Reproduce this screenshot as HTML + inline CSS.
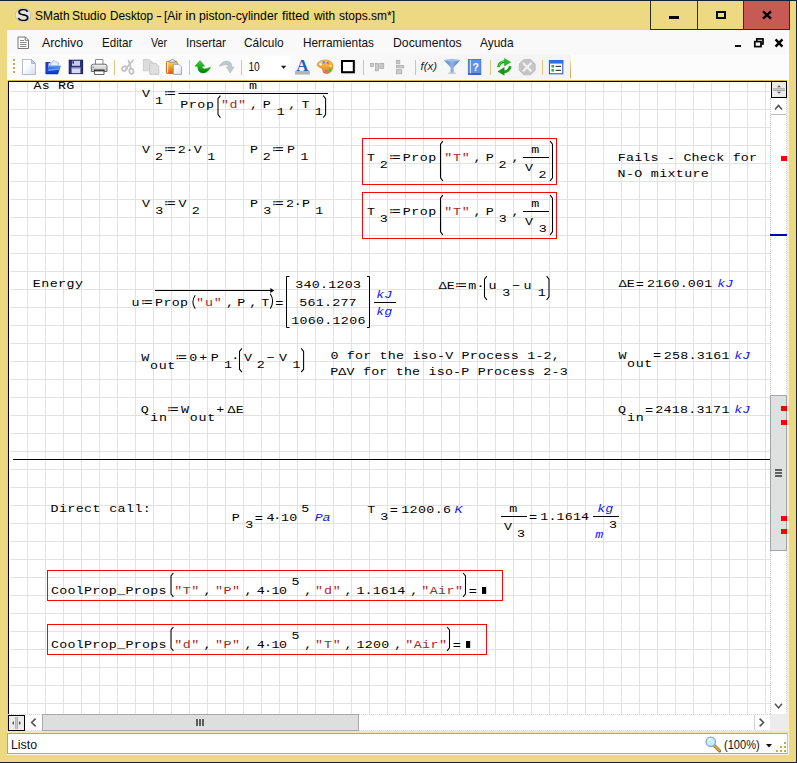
<!DOCTYPE html>
<html lang="es">
<head>
<meta charset="utf-8">
<title>SMath Studio Desktop - [Air in piston-cylinder fitted with stops.sm*]</title>
<style>
html,body{margin:0;padding:0;}
body{width:797px;height:763px;overflow:hidden;background:#ecd982;position:relative;
  font-family:"Liberation Sans",sans-serif;font-size:12px;color:#000;}
.abs,#win *{position:absolute;box-sizing:border-box;}
#win{position:absolute;left:0;top:0;width:797px;height:763px;background:#ecd982;overflow:hidden;}
#edge-t{left:0;top:0;width:797px;height:1px;background:#172231;}
#edge-r{left:796px;top:0;width:1px;height:763px;background:#172231;}
#edge-b{left:0;top:762px;width:797px;height:1px;background:#172231;}
#title{left:0;top:6px;width:640px;height:20px;line-height:20px;font-size:13px;white-space:nowrap;color:#000;}
#title span{top:0;height:20px;transform-origin:0 50%;white-space:nowrap;}
.wb{top:1px;height:29px;border-left:1px solid #2b2b30;border-bottom:1px solid #2b2b30;}
#wb-min{left:650px;width:47px;}
#wb-max{left:697px;width:46px;}
#wb-cls{left:743px;width:47px;background:#c75a54;border-right:1px solid #2b2b30;}
#client{left:7px;top:30px;width:782px;height:725px;background:#f9f9fa;}
/* menu */
#menubar{left:0;top:0;width:782px;height:25px;background:#f9f9fa;}
.mi{top:1px;height:25px;line-height:25px;font-size:12.2px;white-space:nowrap;color:#111;transform-origin:0 50%;}
/* toolbar */
#toolbar{left:0;top:24px;width:564px;height:25px;background:linear-gradient(to right,#fdfdfd 0%,#fbfbfb 40%,#f4f4f4 100%);border-radius:0 3px 3px 0;}
#tbedge{left:563px;top:30px;width:1px;height:18px;background:linear-gradient(to bottom,rgba(217,186,100,0.2),#d9ba64 50%,#cfa84a);}
#tbrest{left:564px;top:25px;width:218px;height:25px;background:#fcfcfc;}
.sep{top:5px;width:1px;height:14px;background:#dcc37a;}
.gd{left:6px;width:2px;height:2px;background:#c9a84c;margin-top:1px;}
/* worksheet frame */
#wsgold{left:0;top:50px;width:782px;height:1px;background:#d9b84a;}
#wsgoldl{left:0;top:50px;width:1px;height:652px;background:#e9d27a;}
#wsblack{left:1px;top:51px;width:779px;height:1px;background:#000;}
#wsblackl{left:1px;top:51px;width:1px;height:650px;background:#000;}
#ws{left:2px;top:52px;width:761px;height:632px;background-color:#fff;overflow:hidden;
  background-image:linear-gradient(to right,#e1e3e1 1px,transparent 1px),linear-gradient(to bottom,#e1e3e1 1px,transparent 1px);
  background-size:18px 18px;background-position:0px 9px;}
#ws svg{left:0;top:0;}
#ws text{font-family:"Liberation Mono","DejaVu Sans Mono",monospace;font-size:11.500px;}
#ws text.r{fill:#a82626;}
#ws text.b{fill:#1414f0;}
#ws text.op{font-family:"DejaVu Sans",sans-serif;font-size:12.2px;letter-spacing:0;}
#ws text.eq{font-family:"Liberation Mono",monospace;font-size:13.6px;letter-spacing:0;}
#ws .par{fill:none;stroke:#000;stroke-width:1.05;}
/* scrollbars */
#vs{left:763px;top:68px;width:17px;height:616px;background:#fff;border-left:1px dotted #c4c4c4;border-right:1px dotted #cfd6e8;}
#vsplit{left:764px;top:51px;width:16px;height:17px;border:1px solid #000;background:#ececec;}
#vthumb{left:763px;top:365px;width:17px;height:156px;background:#dfe0e0;border:1px solid #a3a3aa;}
.mk{left:774px;width:6px;height:5px;background:#ff0000;}
#rstrip{left:780px;top:50px;width:2px;height:652px;background:#f6efc9;}
#hs{left:1px;top:684px;width:762px;height:17px;background:#fff;border-top:1px dotted #d4d4d4;border-bottom:1px dotted #d9d9d9;}
#hsplit{left:1px;top:685px;width:17px;height:16px;border:1px solid #000;background:#ececec;}
#hthumb{left:35px;top:684px;width:317px;height:17px;background:#dddede;border:1px solid #a9a9ad;}
#corner{left:763px;top:684px;width:17px;height:17px;background:#ececec;}
#gap{left:0;top:701px;width:782px;height:2px;background:#f3e6b0;}
/* status */
#status{left:0;top:703px;width:781px;height:21px;background:#fff;border:1px solid #a5a5a5;border-right-color:#c4c4c4;}
#statusu{left:0;top:724px;width:782px;height:1px;background:#fbf7e4;}
#listo{left:4.49px;top:704px;height:21px;line-height:22px;font-size:12.2px;color:#111;transform-origin:0 50%;transform:scaleX(1.0125);}
#zoomt{left:716.69px;top:704px;height:21px;line-height:22px;font-size:12.2px;color:#111;white-space:nowrap;transform-origin:0 50%;transform:scaleX(0.9079);}
svg{overflow:visible;}
</style>
</head>
<body>
<div id="win">
  <div id="edge-t"></div><div id="edge-r"></div><div id="edge-b"></div>

  <!-- title bar -->
  <svg style="left:14px;top:7px" width="18" height="16" viewBox="0 0 18 16">
    <ellipse cx="9" cy="8" rx="7.8" ry="6.9" fill="#e3e4e4" stroke="#b9b9b4" stroke-width="0.7"/>
    <text x="9" y="13.8" text-anchor="middle" font-family="Liberation Sans,sans-serif" font-size="16.2" fill="#000" transform="translate(9 0) scale(1.16 1) translate(-9 0)">S</text>
  </svg>
  <div id="title"><span style="left:35.38px;transform:scaleX(0.9194)">SMath</span> <span style="left:72.47px;transform:scaleX(0.9278)">Studio</span> <span style="left:109.90px;transform:scaleX(0.9043)">Desktop</span> <span style="left:156.10px;transform:scaleX(1.4000)">-</span> <span style="left:164.08px;transform:scaleX(0.9211)">[Air</span> <span style="left:185.60px;transform:scaleX(1.0000)">in</span> <span style="left:198.86px;transform:scaleX(0.9398)">piston-cylinder</span> <span style="left:282.10px;transform:scaleX(0.9679)">fitted</span> <span style="left:313.80px;transform:scaleX(0.9174)">with</span> <span style="left:338.78px;transform:scaleX(0.9237)">stops.sm*]</span></div>
  <div class="wb" id="wb-min"><div style="left:18px;top:15px;width:10px;height:3px;background:#000"></div></div>
  <div class="wb" id="wb-max"><div style="left:18px;top:10px;width:10px;height:8px;border:2px solid #000"></div></div>
  <div class="wb" id="wb-cls">
    <svg style="left:18px;top:10px" width="10" height="8" viewBox="0 0 10 8"><path d="M1 0.3 L9 7.7 M9 0.3 L1 7.7" stroke="#000" stroke-width="2.3" fill="none"/></svg>
  </div>

  <div id="client">
    <!-- menu bar -->
    <div id="menubar">
      <svg style="left:10px;top:6px" width="13" height="14" viewBox="0 0 13 14">
        <path d="M1 1 H8.5 L11.5 4 V12.5 H1 Z" fill="#fff" stroke="#777" stroke-width="1"/>
        <path d="M8.2 1 V4.3 H11.5" fill="none" stroke="#777" stroke-width="1"/>
        <path d="M3 4.5 H7 M3 6.5 H9.5 M3 8.5 H9.5 M3 10.5 H9.5" stroke="#8a8a8a" stroke-width="1"/>
      </svg>
      <div class="mi" style="left:35.30px;transform:scaleX(1.0100)">Archivo</div>
      <div class="mi" style="left:94.65px;transform:scaleX(0.9516)">Editar</div>
      <div class="mi" style="left:144.00px;transform:scaleX(0.8722)">Ver</div>
      <div class="mi" style="left:178.63px;transform:scaleX(0.9675)">Insertar</div>
      <div class="mi" style="left:237.40px;transform:scaleX(0.9775)">Cálculo</div>
      <div class="mi" style="left:295.73px;transform:scaleX(0.9694)">Herramientas</div>
      <div class="mi" style="left:385.70px;transform:scaleX(1.0030)">Documentos</div>
      <div class="mi" style="left:473.30px;transform:scaleX(0.9765)">Ayuda</div>
      <!-- MDI child buttons -->
      <div style="left:728px;top:15px;width:6px;height:2px;background:#111"></div>
      <svg style="left:747px;top:8px" width="10" height="10" viewBox="0 0 10 10">
        <rect x="2.8" y="0.9" width="6.2" height="5" fill="none" stroke="#000" stroke-width="1.7"/>
        <rect x="0.8" y="3.6" width="6.2" height="5" fill="#fbfbfb" stroke="#000" stroke-width="1.7"/>
      </svg>
      <svg style="left:768px;top:9px" width="8" height="8" viewBox="0 0 8 8"><path d="M0.6 0.4 L7.4 7.6 M7.4 0.4 L0.6 7.6" stroke="#000" stroke-width="2.4" fill="none"/></svg>
    </div>

    <!-- toolbar -->
    <div id="tbrest"></div>
    <div id="toolbar">
      <div class="gd" style="top:4px"></div><div class="gd" style="top:8px"></div><div class="gd" style="top:12px"></div><div class="gd" style="top:16px"></div>
      <svg style="left:0;top:0" width="564" height="25" viewBox="7 54 564 25">
  <defs>
    <linearGradient id="gpage" x1="0" y1="0" x2="1" y2="1"><stop offset="0.35" stop-color="#ffffff"/><stop offset="1" stop-color="#d3dbf0"/></linearGradient>
    <linearGradient id="gfold" x1="0" y1="0" x2="0" y2="1"><stop offset="0" stop-color="#6fa6ff"/><stop offset="0.45" stop-color="#1f57e0"/><stop offset="1" stop-color="#0b2fb4"/></linearGradient>
    <linearGradient id="gclip" x1="0" y1="0" x2="0" y2="1"><stop offset="0" stop-color="#ffdf55"/><stop offset="1" stop-color="#dc5a00"/></linearGradient>
    <linearGradient id="ggreen" x1="0" y1="0" x2="0" y2="1"><stop offset="0" stop-color="#2fe02f"/><stop offset="1" stop-color="#057a05"/></linearGradient>
    <linearGradient id="gprn" x1="0" y1="0" x2="0" y2="1"><stop offset="0" stop-color="#f4f4f4"/><stop offset="1" stop-color="#b9b9b9"/></linearGradient>
    <linearGradient id="gpal" x1="0" y1="0" x2="0" y2="1"><stop offset="0" stop-color="#ffcf6a"/><stop offset="1" stop-color="#e07a10"/></linearGradient>
    <linearGradient id="gfun" x1="0" y1="0" x2="1" y2="0"><stop offset="0" stop-color="#4f7fc4"/><stop offset="0.5" stop-color="#8fb2e6"/><stop offset="1" stop-color="#4a76bb"/></linearGradient>
  </defs>
  <!-- new -->
  <path d="M22.5 59.5 H31.5 L35.5 63.5 V74.5 H22.5 Z" fill="url(#gpage)" stroke="#adb4cc" stroke-width="0.9"/>
  <path d="M31.5 59.5 V63.5 H35.5 Z" fill="#c3cae0" stroke="#a3abc4" stroke-width="0.8"/>
  <!-- open -->
  <path d="M45.4 62 H50 L51 63.2 H48.5 V74 H45.4 Z" fill="#1a3fd0"/>
  <path d="M49 66 L53.5 60.5 L58.8 63 L57.5 66.5 Z" fill="#e8f0ff" stroke="#7a9ae6" stroke-width="0.6"/>
  <path d="M48.8 65.4 H61 L58 74.3 H45.8 Z" fill="url(#gfold)"/>
  <path d="M48.5 69.3 L59.3 68.2 L58.8 69.8 L48 71 Z" fill="#8fbcff" opacity="0.75"/>
  <!-- save -->
  <rect x="69.2" y="60.2" width="13.4" height="13.4" fill="#2a327c" stroke="#171c55" stroke-width="1"/>
  <rect x="72" y="60.8" width="8" height="5" fill="#c9c9ea"/>
  <rect x="72.4" y="61.2" width="1.6" height="2.4" fill="#2a327c"/>
  <rect x="71.6" y="67.6" width="8.8" height="5.6" fill="#d9d9f2"/>
  <rect x="71.6" y="67.6" width="8.8" height="1.2" fill="#9c9cc8"/>
  <!-- print -->
  <path d="M95.5 64.5 V59.5 H103 V64.5" fill="#fff" stroke="#8c8c8c" stroke-width="1"/>
  <path d="M93.5 64.2 H105 Q107 64.2 107 66.5 V71.5 H91.3 V66.5 Q91.3 64.2 93.5 64.2 Z" fill="url(#gprn)" stroke="#5e5e5e" stroke-width="0.9"/>
  <rect x="94" y="69.6" width="10.5" height="1.5" fill="#1a1a1a"/>
  <path d="M94.5 71 H104 V74.5 H94.5 Z" fill="#fff" stroke="#555" stroke-width="0.9"/>
  <rect x="92.6" y="66.6" width="1.2" height="1.2" fill="#1db41d"/>
  <!-- separators -->
  <g fill="#e0c67c">
    <rect x="114" y="60" width="1" height="15"/><rect x="189" y="60" width="1" height="15"/><rect x="241" y="60" width="1" height="15"/>
    <rect x="363" y="60" width="1" height="15"/><rect x="415" y="60" width="1" height="15"/><rect x="490" y="60" width="1" height="15"/><rect x="542" y="60" width="1" height="15"/>
  </g>
  <!-- cut (disabled) -->
  <g fill="none" stroke="#c2c2c2" stroke-width="1.7" stroke-linecap="round">
    <path d="M133 60.2 L126 68.5"/><path d="M128.6 60.5 L131 68.8"/>
    <ellipse cx="124.5" cy="68.6" rx="2.6" ry="2.1" transform="rotate(-35 124.5 68.6)"/>
    <ellipse cx="131.4" cy="71.2" rx="2" ry="2.7" transform="rotate(-10 131.4 71.2)"/>
  </g>
  <!-- copy (disabled) -->
  <path d="M143.4 59.6 H149.5 L152.4 62.5 V70.8 H143.4 Z" fill="#dcdcdc" stroke="#c6c6c6" stroke-width="0.8"/>
  <path d="M149.8 63.2 H155.8 L158.8 66.2 V74.4 H149.8 Z" fill="#dedede" stroke="#c3c3c3" stroke-width="0.8"/>
  <!-- paste -->
  <rect x="166.4" y="61.4" width="10.8" height="12" rx="1" fill="url(#gclip)" stroke="#c45a08" stroke-width="0.8"/>
  <rect x="167" y="62" width="1.2" height="10.8" fill="#fff4d0"/>
  <path d="M169.4 62.2 V60.8 Q172.4 58 175.4 60.8 V62.2 Z" fill="#e9edf6" stroke="#7e8aa8" stroke-width="0.9"/>
  <path d="M173.4 64.4 H179 L181.6 67 V74.4 H173.4 Z" fill="url(#gpage)" stroke="#98a2c4" stroke-width="0.9"/>
  <!-- undo -->
  <path d="M195 66.2 L200 60.6 L204.6 66.2 L201.8 66.2 Q202.4 71 210.6 67.2 Q207 74 201.4 72.8 Q197.6 71.6 197.8 66.2 Z" fill="url(#ggreen)" stroke="#0a8a0a" stroke-width="0.5"/>
  <!-- redo (disabled) -->
  <path d="M234.2 67 L230.2 73 L226.4 67 L228.8 67 Q228 62.6 219 66.4 Q222.4 60.4 228.4 61.2 Q232 62.2 232 67 Z" fill="#c3c6cc" stroke="#aeb2ba" stroke-width="0.5"/>
  <!-- font size combo -->
  <rect x="245" y="56" width="46" height="22.5" fill="#ffffff"/>
  <text x="248.4" y="70.6" font-family="Liberation Sans, sans-serif" font-size="12.2" fill="#111" textLength="11.4" lengthAdjust="spacingAndGlyphs">10</text>
  <path d="M281 65.8 H286.2 L283.6 68.8 Z" fill="#111"/>
  <!-- font A -->
  <rect x="295" y="71" width="15" height="3.6" fill="#b5b5b5"/>
  <text x="302.5" y="70.7" text-anchor="middle" font-family="Liberation Serif, serif" font-weight="bold" font-size="17" fill="#1f5fb8">A</text>
  <!-- palette -->
  <path d="M318 62.6 Q321.6 59.2 327.6 60.2 Q333.6 61.6 332.8 67.6 Q331.8 73.6 326 73.6 Q322.6 73.4 322.8 70.2 Q322.8 68 320 67.4 Q315.6 66 318 62.6 Z" fill="url(#gpal)" stroke="#c97618" stroke-width="0.6"/>
  <circle cx="320.6" cy="64.2" r="1.2" fill="#fff8ea"/>
  <circle cx="323.8" cy="62.4" r="1.3" fill="#3f9cff"/><circle cx="327.8" cy="62.8" r="1.2" fill="#f0602a"/>
  <circle cx="330.6" cy="66" r="1.2" fill="#ffe23a"/><circle cx="330" cy="70" r="1.4" fill="#2fd02f"/><circle cx="326.4" cy="71.4" r="1.4" fill="#b06af0"/>
  <!-- border -->
  <rect x="343" y="62" width="12.6" height="12" fill="#c9c9c9" opacity="0.6"/>
  <rect x="342" y="61" width="11.8" height="11.2" fill="#fff" stroke="#000" stroke-width="2"/>
  <!-- align (disabled) -->
  <g fill="#c9c9c9" stroke="#adadad" stroke-width="0.8">
    <rect x="370.4" y="63.4" width="3" height="3"/><rect x="375.4" y="63.4" width="3" height="7.4"/><rect x="379.9" y="63.4" width="3.8" height="5"/>
    <rect x="396.4" y="60.4" width="3.4" height="3.4"/><rect x="396.4" y="65.4" width="7.4" height="2.4"/><rect x="396.4" y="69.6" width="5.4" height="4.2"/>
  </g>
  <!-- f(x) -->
  <text x="420.6" y="70.4" font-family="Liberation Sans, sans-serif" font-style="italic" font-size="11.6" fill="#1c1c1c" textLength="16.4" lengthAdjust="spacingAndGlyphs">f(x)</text>
  <!-- funnel -->
  <ellipse cx="452" cy="73.2" rx="4.2" ry="0.9" fill="#b9bfcc" opacity="0.7"/>
  <path d="M444 60.2 H460.2 L453.6 67.4 V72.8 H450.6 V67.4 Z" fill="url(#gfun)"/>
  <ellipse cx="452.1" cy="60.4" rx="8.1" ry="1.3" fill="#9dbcea"/>
  <!-- help book -->
  <rect x="468.3" y="59.4" width="12.5" height="15" fill="#5f8fe6" stroke="#3d6fd0" stroke-width="0.8"/>
  <rect x="468.3" y="73.4" width="12.5" height="1.2" fill="#2450b4"/>
  <rect x="470" y="59.8" width="0.9" height="13.6" fill="#dfe9ff"/>
  <text x="475.8" y="71.2" text-anchor="middle" font-family="Liberation Sans, sans-serif" font-weight="bold" font-size="10.5" fill="#fff">?</text>
  <!-- refresh -->
  <g fill="none" stroke="#14a514" stroke-width="2.7">
    <path d="M498.4 67.2 A6.2 6.2 0 0 1 505.4 61.6"/>
    <path d="M510.2 66.2 A6.2 6.2 0 0 1 503.2 71.9"/>
  </g>
  <path d="M504.4 58.4 L510.6 62.2 L504.4 66 Z" fill="#1fc01f" stroke="#0b8a0b" stroke-width="0.4"/>
  <path d="M504.2 67.6 L498 71.4 L504.2 75.2 Z" fill="#0f9a0f" stroke="#0b7a0b" stroke-width="0.4"/>
  <path d="M498.9 66.4 A5.4 5.4 0 0 1 504.6 61.2" fill="none" stroke="#7af07a" stroke-width="0.8"/>
  <!-- stop (disabled) -->
  <path d="M523.8 59.4 H530.6 L535.2 64 V70.2 L530.6 74.8 H523.8 L519.2 70.2 V64 Z" fill="#c4c4c6" stroke="#b3b3bb" stroke-width="0.7"/>
  <path d="M523.6 63.4 L530.8 70.8 M530.8 63.4 L523.6 70.8" stroke="#f1f1f1" stroke-width="2.2" stroke-linecap="round"/>
  <!-- window list -->
  <rect x="549.4" y="60.6" width="13.4" height="13.2" fill="#fff" stroke="#1f4fb4" stroke-width="1"/>
  <rect x="549" y="60.2" width="14.2" height="3.4" fill="#2d6fe4"/>
  <rect x="551.4" y="65" width="2.6" height="2.6" fill="#38b24a"/><rect x="551.4" y="69" width="2.6" height="2.6" fill="#38b24a"/>
  <rect x="555.6" y="65.8" width="5.4" height="1.1" fill="#333"/><rect x="555.6" y="69.8" width="5.4" height="1.1" fill="#333"/>
</svg>

    </div>
    <div id="tbedge"></div>

    <!-- worksheet -->
    <div id="wsgold"></div><div id="wsgoldl"></div><div id="wsblack"></div><div id="wsblackl"></div>
    <div id="ws">
      <div style="left:0;top:0;width:1px;height:632px;background:#fff"></div>
      <svg width="761" height="632" viewBox="9 82 761 632">
<text transform="translate(33.60 89.00) scale(1.1594 1)" letter-spacing="0.133">As RG</text>
<text transform="translate(617.74 161.00) scale(1.1594 1)" letter-spacing="0.186">Fails - Check for</text>
<text transform="translate(617.55 177.00) scale(1.1594 1)" letter-spacing="0.287">N-O mixture</text>
<text transform="translate(32.75 287.00) scale(1.1594 1)" letter-spacing="0.396">Energy</text>
<text transform="translate(330.39 359.00) scale(1.1594 1)" letter-spacing="0.179">0 for the iso-V Process 1-2,</text>
<text transform="translate(330.15 375.00) scale(1.1594 1)" letter-spacing="0.176">PΔV for the iso-P Process 2-3</text>
<text transform="translate(50.55 512.00) scale(1.1594 1)" letter-spacing="0.337">Direct call:</text>
<text transform="translate(141.93 97.00) scale(1.1594 1)">V</text>
<text transform="translate(154.94 104.00) scale(1.1594 1)">1</text>
<text class="op" x="164.37" y="97.33">≔</text>
<rect x="178.50" y="93.00" width="149.50" height="1" fill="#000"/>
<text transform="translate(248.96 89.00) scale(1.1594 1)">m</text>
<text transform="translate(180.25 108.00) scale(1.1594 1)" letter-spacing="0.477">Prop</text>
<path d="M220.40 95.60 L218.00 98.60 L218.00 114.60 L220.40 117.60" class="par"/>
<text transform="translate(220.90 108.00) scale(1.1594 1)" letter-spacing="0.482" class="r">&quot;d&quot;</text>
<text transform="translate(249.91 108.00) scale(1.1594 1)">,</text>
<text transform="translate(262.75 108.00) scale(1.1594 1)">P</text>
<text transform="translate(276.64 115.00) scale(1.1594 1)">1</text>
<text transform="translate(288.21 108.00) scale(1.1594 1)">,</text>
<text transform="translate(301.51 108.00) scale(1.1594 1)">T</text>
<text transform="translate(314.64 115.00) scale(1.1594 1)">1</text>
<path d="M323.20 95.60 L325.60 98.60 L325.60 114.60 L323.20 117.60" class="par"/>
<text transform="translate(141.93 153.00) scale(1.1594 1)">V</text>
<text transform="translate(154.96 160.00) scale(1.1594 1)">2</text>
<text class="op" x="164.37" y="153.23">≔</text>
<text transform="translate(177.76 153.00) scale(1.1594 1)">2</text>
<text transform="translate(185.47 153.00) scale(1.1594 1)">·</text>
<text transform="translate(193.63 153.00) scale(1.1594 1)">V</text>
<text transform="translate(207.14 160.00) scale(1.1594 1)">1</text>
<text transform="translate(249.95 153.00) scale(1.1594 1)">P</text>
<text transform="translate(262.86 160.00) scale(1.1594 1)">2</text>
<text class="op" x="272.37" y="153.23">≔</text>
<text transform="translate(286.95 153.00) scale(1.1594 1)">P</text>
<text transform="translate(300.44 160.00) scale(1.1594 1)">1</text>
<text transform="translate(141.93 207.00) scale(1.1594 1)">V</text>
<text transform="translate(155.17 214.00) scale(1.1594 1)">3</text>
<text class="op" x="164.37" y="207.13">≔</text>
<text transform="translate(178.53 207.00) scale(1.1594 1)">V</text>
<text transform="translate(191.76 214.00) scale(1.1594 1)">2</text>
<text transform="translate(249.95 207.00) scale(1.1594 1)">P</text>
<text transform="translate(263.27 214.00) scale(1.1594 1)">3</text>
<text class="op" x="272.37" y="207.13">≔</text>
<text transform="translate(286.06 207.00) scale(1.1594 1)">2</text>
<text transform="translate(293.67 207.00) scale(1.1594 1)">·</text>
<text transform="translate(301.95 207.00) scale(1.1594 1)">P</text>
<text transform="translate(315.14 214.00) scale(1.1594 1)">1</text>
<rect x="362.5" y="138.5" width="194.0" height="46.0" fill="none" stroke="#f60808" stroke-width="1"/>
<text transform="translate(366.91 161.00) scale(1.1594 1)">T</text>
<text transform="translate(379.76 168.00) scale(1.1594 1)">2</text>
<text class="op" x="389.37" y="161.23">≔</text>
<text transform="translate(402.65 161.00) scale(1.1594 1)" letter-spacing="0.448">Prop</text>
<path d="M442.90 141.20 L440.50 144.20 L440.50 177.80 L442.90 180.80" class="par"/>
<text transform="translate(444.20 161.00) scale(1.1594 1)" letter-spacing="0.698" class="r">&quot;T&quot;</text>
<text transform="translate(473.51 161.00) scale(1.1594 1)">,</text>
<text transform="translate(485.75 161.00) scale(1.1594 1)">P</text>
<text transform="translate(498.56 168.00) scale(1.1594 1)">2</text>
<text transform="translate(511.51 161.00) scale(1.1594 1)">,</text>
<rect x="523.00" y="157.00" width="26.00" height="1" fill="#000"/>
<text transform="translate(531.36 153.00) scale(1.1594 1)">m</text>
<text transform="translate(524.93 171.00) scale(1.1594 1)">V</text>
<text transform="translate(538.56 178.00) scale(1.1594 1)">2</text>
<path d="M550.10 141.20 L552.50 144.20 L552.50 177.80 L550.10 180.80" class="par"/>
<rect x="362.5" y="192.5" width="194.0" height="46.0" fill="none" stroke="#f60808" stroke-width="1"/>
<text transform="translate(366.91 215.00) scale(1.1594 1)">T</text>
<text transform="translate(379.87 222.00) scale(1.1594 1)">3</text>
<text class="op" x="389.37" y="215.23">≔</text>
<text transform="translate(402.65 215.00) scale(1.1594 1)" letter-spacing="0.448">Prop</text>
<path d="M442.90 195.20 L440.50 198.20 L440.50 231.80 L442.90 234.80" class="par"/>
<text transform="translate(444.20 215.00) scale(1.1594 1)" letter-spacing="0.698" class="r">&quot;T&quot;</text>
<text transform="translate(473.51 215.00) scale(1.1594 1)">,</text>
<text transform="translate(485.75 215.00) scale(1.1594 1)">P</text>
<text transform="translate(498.67 222.00) scale(1.1594 1)">3</text>
<text transform="translate(511.51 215.00) scale(1.1594 1)">,</text>
<rect x="523.00" y="211.00" width="26.00" height="1" fill="#000"/>
<text transform="translate(531.36 207.00) scale(1.1594 1)">m</text>
<text transform="translate(524.93 225.00) scale(1.1594 1)">V</text>
<text transform="translate(538.67 232.00) scale(1.1594 1)">3</text>
<path d="M550.10 195.20 L552.50 198.20 L552.50 231.80 L550.10 234.80" class="par"/>
<text transform="translate(131.40 306.00) scale(1.1594 1)">u</text>
<text class="op" x="141.37" y="306.13">≔</text>
<rect x="155.00" y="290.00" width="118.50" height="1" fill="#000"/>
<path d="M270.3 287.9 L274.2 290.5 L270.3 293.1 Z" fill="#000"/>
<text transform="translate(155.05 306.00) scale(1.1594 1)" letter-spacing="0.304">Prop</text>
<path d="M195.2 295.3 Q190.6 302 195.2 308.7" class="par"/>
<text transform="translate(196.10 306.00) scale(1.1594 1)" letter-spacing="0.741" class="r">&quot;u&quot;</text>
<text transform="translate(226.11 306.00) scale(1.1594 1)">,</text>
<text transform="translate(237.35 306.00) scale(1.1594 1)">P</text>
<text transform="translate(249.31 306.00) scale(1.1594 1)">,</text>
<text transform="translate(261.31 306.00) scale(1.1594 1)">T</text>
<path d="M270.3 293.8 Q275 301.2 270.3 308.6" class="par"/>
<text class="eq" x="275.13" y="306.87">=</text>
<path d="M289.5 276.5 H286.5 V327.5 H289.5" fill="none" stroke="#000" stroke-width="1"/>
<path d="M367 276.5 H369.5 V327.5 H367" fill="none" stroke="#000" stroke-width="1"/>
<text transform="translate(295.37 288.00) scale(1.1594 1)" letter-spacing="0.194">340.1203</text>
<text transform="translate(299.37 306.00) scale(1.1594 1)" letter-spacing="0.183">561.277</text>
<text transform="translate(291.24 324.00) scale(1.1594 1)" letter-spacing="0.240">1060.1206</text>
<rect x="374.00" y="302.00" width="22.00" height="1" fill="#000"/>
<text transform="translate(376.35 298.00) scale(1.1594 1)" font-style="italic" class="b">kJ</text>
<text transform="translate(376.35 315.00) scale(1.1594 1)" font-style="italic" class="b">kg</text>
<text transform="translate(438.72 289.00) scale(1.1594 1)" letter-spacing="0.063">ΔE</text>
<text class="op" x="455.37" y="289.13">≔</text>
<text transform="translate(468.26 289.00) scale(1.1594 1)">m</text>
<text transform="translate(476.47 289.00) scale(1.1594 1)">·</text>
<path d="M486.90 276.20 L484.50 279.20 L484.50 296.80 L486.90 299.80" class="par"/>
<text transform="translate(488.50 289.00) scale(1.1594 1)">u</text>
<text transform="translate(502.27 296.00) scale(1.1594 1)">3</text>
<text transform="translate(512.14 289.00) scale(1.1594 1)">−</text>
<text transform="translate(523.60 289.00) scale(1.1594 1)">u</text>
<text transform="translate(537.64 296.00) scale(1.1594 1)">1</text>
<path d="M546.60 276.20 L549.00 279.20 L549.00 296.80 L546.60 299.80" class="par"/>
<text transform="translate(618.72 287.00) scale(1.1594 1)" letter-spacing="0.063">ΔE</text>
<text class="eq" x="635.83" y="288.07">=</text>
<text transform="translate(646.96 287.00) scale(1.1594 1)" letter-spacing="0.158">2160.001</text>
<text transform="translate(717.15 287.00) scale(1.1594 1)" font-style="italic" class="b">kJ</text>
<text transform="translate(141.20 361.00) scale(1.1594 1)">W</text>
<text transform="translate(150.05 369.00) scale(1.1594 1)" letter-spacing="0.572">out</text>
<text class="op" x="175.47" y="361.33">≔</text>
<text transform="translate(189.19 361.00) scale(1.1594 1)">0</text>
<text transform="translate(199.24 361.00) scale(1.1594 1)">+</text>
<text transform="translate(210.75 361.00) scale(1.1594 1)">P</text>
<text transform="translate(223.94 368.00) scale(1.1594 1)">1</text>
<text transform="translate(231.37 361.00) scale(1.1594 1)">·</text>
<path d="M241.90 348.40 L239.50 351.40 L239.50 369.20 L241.90 372.20" class="par"/>
<text transform="translate(243.93 361.00) scale(1.1594 1)">V</text>
<text transform="translate(256.86 368.00) scale(1.1594 1)">2</text>
<text transform="translate(266.84 361.00) scale(1.1594 1)">−</text>
<text transform="translate(278.93 361.00) scale(1.1594 1)">V</text>
<text transform="translate(292.44 368.00) scale(1.1594 1)">1</text>
<path d="M301.20 348.40 L303.60 351.40 L303.60 369.20 L301.20 372.20" class="par"/>
<text transform="translate(618.50 359.00) scale(1.1594 1)">W</text>
<text transform="translate(627.05 367.00) scale(1.1594 1)" letter-spacing="0.572">out</text>
<text class="eq" x="652.93" y="359.27">=</text>
<text transform="translate(663.66 359.00) scale(1.1594 1)" letter-spacing="0.219">258.3161</text>
<text transform="translate(734.35 359.00) scale(1.1594 1)" font-style="italic" class="b">kJ</text>
<text transform="translate(140.64 413.00) scale(1.1594 1)">Q</text>
<text transform="translate(150.37 421.00) scale(1.1594 1)" letter-spacing="0.605">in</text>
<text class="op" x="167.17" y="413.23">≔</text>
<text transform="translate(180.90 413.00) scale(1.1594 1)">W</text>
<text transform="translate(189.85 421.00) scale(1.1594 1)" letter-spacing="0.658">out</text>
<text transform="translate(216.24 413.00) scale(1.1594 1)">+</text>
<text transform="translate(227.52 413.00) scale(1.1594 1)" letter-spacing="0.236">ΔE</text>
<text transform="translate(617.94 413.00) scale(1.1594 1)">Q</text>
<text transform="translate(627.07 421.00) scale(1.1594 1)" letter-spacing="0.605">in</text>
<text class="eq" x="645.03" y="413.77">=</text>
<text transform="translate(655.16 413.00) scale(1.1594 1)" letter-spacing="0.246">2418.3171</text>
<text transform="translate(734.35 413.00) scale(1.1594 1)" font-style="italic" class="b">kJ</text>
<rect x="13.00" y="459.00" width="757.00" height="1" fill="#000"/>
<text transform="translate(231.75 521.00) scale(1.1594 1)">P</text>
<text transform="translate(245.27 528.00) scale(1.1594 1)">3</text>
<text class="eq" x="254.83" y="522.07">=</text>
<text transform="translate(266.53 521.00) scale(1.1594 1)">4</text>
<text transform="translate(273.37 521.00) scale(1.1594 1)">·</text>
<text transform="translate(280.94 521.00) scale(1.1594 1)" letter-spacing="0.330">10</text>
<text transform="translate(301.27 512.00) scale(1.1594 1)">5</text>
<text transform="translate(314.63 521.00) scale(1.1594 1)" font-style="italic" class="b">Pa</text>
<text transform="translate(367.31 513.00) scale(1.1594 1)">T</text>
<text transform="translate(380.27 520.00) scale(1.1594 1)">3</text>
<text class="eq" x="389.83" y="514.07">=</text>
<text transform="translate(401.24 513.00) scale(1.1594 1)" letter-spacing="0.315">1200.6</text>
<text transform="translate(454.53 513.00) scale(1.1594 1)" font-style="italic" class="b">K</text>
<rect x="501.00" y="516.00" width="26.00" height="1" fill="#000"/>
<text transform="translate(509.36 512.00) scale(1.1594 1)">m</text>
<text transform="translate(503.93 530.00) scale(1.1594 1)">V</text>
<text transform="translate(516.97 537.00) scale(1.1594 1)">3</text>
<text class="eq" x="528.93" y="520.77">=</text>
<text transform="translate(540.24 520.00) scale(1.1594 1)" letter-spacing="0.145">1.1614</text>
<rect x="593.00" y="516.00" width="26.00" height="1" fill="#000"/>
<text transform="translate(597.25 512.00) scale(1.1594 1)" font-style="italic" class="b">kg</text>
<text transform="translate(595.30 538.00) scale(1.1594 1)" font-style="italic" class="b">m</text>
<text transform="translate(608.97 528.00) scale(1.1594 1)">3</text>
<rect x="47.5" y="570.5" width="455.0" height="30.0" fill="none" stroke="#f60808" stroke-width="1"/>
<text transform="translate(50.96 594.00) scale(1.1594 1)" letter-spacing="0.241">CoolProp_Props</text>
<path d="M173.40 573.00 L171.00 576.00 L171.00 593.80 L173.40 596.80" class="par"/>
<text transform="translate(174.30 594.00) scale(1.1594 1)" letter-spacing="0.439" class="r">&quot;T&quot;</text>
<text transform="translate(203.61 594.00) scale(1.1594 1)">,</text>
<text transform="translate(215.00 594.00) scale(1.1594 1)" letter-spacing="0.439" class="r">&quot;P&quot;</text>
<text transform="translate(244.61 594.00) scale(1.1594 1)">,</text>
<text transform="translate(256.73 594.00) scale(1.1594 1)">4</text>
<text transform="translate(263.97 594.00) scale(1.1594 1)">·</text>
<text transform="translate(271.44 594.00) scale(1.1594 1)" letter-spacing="-0.360">10</text>
<text transform="translate(291.47 585.00) scale(1.1594 1)">5</text>
<text transform="translate(304.31 594.00) scale(1.1594 1)">,</text>
<text transform="translate(315.00 594.00) scale(1.1594 1)" letter-spacing="0.784" class="r">&quot;d&quot;</text>
<text transform="translate(344.61 594.00) scale(1.1594 1)">,</text>
<text transform="translate(356.44 594.00) scale(1.1594 1)" letter-spacing="0.128">1.1614</text>
<text transform="translate(410.31 594.00) scale(1.1594 1)">,</text>
<text transform="translate(421.20 594.00) scale(1.1594 1)" letter-spacing="0.392" class="r">&quot;Air&quot;</text>
<path d="M463.10 573.00 L465.50 576.00 L465.50 593.80 L463.10 596.80" class="par"/>
<text class="eq" x="468.73" y="594.97">=</text>
<rect x="482.00" y="587.00" width="4.20" height="6.90" fill="#000"/>
<rect x="47.5" y="624.5" width="439.0" height="30.0" fill="none" stroke="#f60808" stroke-width="1"/>
<text transform="translate(50.96 648.00) scale(1.1594 1)" letter-spacing="0.241">CoolProp_Props</text>
<path d="M173.40 627.00 L171.00 630.00 L171.00 647.80 L173.40 650.80" class="par"/>
<text transform="translate(174.30 648.00) scale(1.1594 1)" letter-spacing="0.439" class="r">&quot;d&quot;</text>
<text transform="translate(203.61 648.00) scale(1.1594 1)">,</text>
<text transform="translate(215.00 648.00) scale(1.1594 1)" letter-spacing="0.439" class="r">&quot;P&quot;</text>
<text transform="translate(244.61 648.00) scale(1.1594 1)">,</text>
<text transform="translate(256.73 648.00) scale(1.1594 1)">4</text>
<text transform="translate(263.97 648.00) scale(1.1594 1)">·</text>
<text transform="translate(271.44 648.00) scale(1.1594 1)" letter-spacing="-0.360">10</text>
<text transform="translate(291.47 639.00) scale(1.1594 1)">5</text>
<text transform="translate(304.31 648.00) scale(1.1594 1)">,</text>
<text transform="translate(315.00 648.00) scale(1.1594 1)" letter-spacing="0.784" class="r">&quot;T&quot;</text>
<text transform="translate(344.61 648.00) scale(1.1594 1)">,</text>
<text transform="translate(356.44 648.00) scale(1.1594 1)" letter-spacing="0.254">1200</text>
<text transform="translate(394.31 648.00) scale(1.1594 1)">,</text>
<text transform="translate(405.20 648.00) scale(1.1594 1)" letter-spacing="0.392" class="r">&quot;Air&quot;</text>
<path d="M447.10 627.00 L449.50 630.00 L449.50 647.80 L447.10 650.80" class="par"/>
<text class="eq" x="452.73" y="648.97">=</text>
<rect x="466.00" y="641.00" width="4.20" height="6.90" fill="#000"/>
      </svg>
    </div>

    <!-- vertical scrollbar -->
    <div id="rstrip"></div>
    <div id="vs"></div>
    <div id="vsplit">
      <svg style="left:0;top:0" width="14" height="15" viewBox="0 0 14 15">
        <path d="M5 5.2 L7 3.2 L9 5.2 Z M5 9.8 L7 11.8 L9 9.8 Z" fill="#555"/>
        <path d="M1 6.8 H13 M1 8.4 H13" stroke="#8a8a8a" stroke-width="0.8"/>
      </svg>
    </div>
    <svg style="left:763px;top:68px" width="17" height="17" viewBox="0 0 17 17"><path d="M5 11.5 L8.5 7.4 L12 11.5" fill="none" stroke="#505050" stroke-width="1.5"/><path d="M1 16.5 H16" stroke="#bdbdbd" stroke-width="1"/></svg>
    <svg style="left:763px;top:667px" width="17" height="17" viewBox="0 0 17 17"><path d="M5 6.8 L8.5 10.9 L12 6.8" fill="none" stroke="#505050" stroke-width="1.5"/></svg>
    <div style="left:763px;top:204px;width:17px;height:2px;background:#0000c8"></div>
    <div id="vthumb">
      <div style="left:4px;top:73px;width:7px;height:2px;background:#5f5f5f"></div>
      <div style="left:4px;top:76px;width:7px;height:2px;background:#5f5f5f"></div>
      <div style="left:4px;top:79px;width:7px;height:2px;background:#5f5f5f"></div>
    </div>
    <div class="mk" style="top:126px"></div>
    <div class="mk" style="top:376px"></div>
    <div class="mk" style="top:390px"></div>
    <div class="mk" style="top:486px"></div>
    <div class="mk" style="top:499px"></div>

    <!-- horizontal scrollbar -->
    <div id="hs"></div>
    <div id="hsplit">
      <svg style="left:0;top:0" width="15" height="14" viewBox="0 0 15 14">
        <path d="M5 5 L3 7 L5 9 Z M10 5 L12 7 L10 9 Z" fill="#555"/>
        <path d="M6.8 1 V13 M8.3 1 V13" stroke="#8a8a8a" stroke-width="0.8"/>
      </svg>
    </div>
    <svg style="left:18px;top:684px" width="17" height="17" viewBox="0 0 17 17"><path d="M10.6 4.6 L6.6 8.5 L10.6 12.4" fill="none" stroke="#505050" stroke-width="1.5"/></svg>
    <svg style="left:746px;top:684px" width="17" height="17" viewBox="0 0 17 17"><path d="M6.6 4.6 L10.6 8.5 L6.6 12.4" fill="none" stroke="#505050" stroke-width="1.5"/><path d="M1.5 1 V16" stroke="#d2d2d2" stroke-width="1"/></svg>
    <div id="hthumb">
      <div style="left:153px;top:4px;width:2px;height:7px;background:#5f5f5f"></div>
      <div style="left:156px;top:4px;width:2px;height:7px;background:#5f5f5f"></div>
      <div style="left:159px;top:4px;width:2px;height:7px;background:#5f5f5f"></div>
    </div>
    <div id="corner"></div>
    <div id="gap"></div>

    <!-- status bar -->
    <div id="status"></div>
    <div id="statusu"></div>
    <div id="listo">Listo</div>
    <svg style="left:698px;top:706px" width="17" height="17" viewBox="0 0 17 17">
      <path d="M8.6 8.8 L14.6 14.8" stroke="#8a6a3a" stroke-width="3.2" stroke-linecap="round"/>
      <path d="M8.8 9 L14.4 14.6" stroke="#f0a030" stroke-width="1.8" stroke-linecap="round"/>
      <circle cx="5.8" cy="5.8" r="4.7" fill="#c9eefb" stroke="#7fa9d8" stroke-width="1.3"/>
      <path d="M3.2 5.2 A3 3 0 0 1 6 2.8" stroke="#fff" stroke-width="1.2" fill="none"/>
    </svg>
    <div id="zoomt">(100%)</div>
    <svg style="left:759px;top:714px" width="6" height="4" viewBox="0 0 6 4"><path d="M0 0 H6 L3 3.6 Z" fill="#111"/></svg>
    <svg style="left:768px;top:711px" width="12" height="12" viewBox="0 0 12 12" fill="#c9a84c">
      <rect x="9" y="1" width="2" height="2"/><rect x="5" y="5" width="2" height="2"/><rect x="9" y="5" width="2" height="2"/>
      <rect x="1" y="9" width="2" height="2"/><rect x="5" y="9" width="2" height="2"/><rect x="9" y="9" width="2" height="2"/>
    </svg>
  </div>
</div>
</body>
</html>
